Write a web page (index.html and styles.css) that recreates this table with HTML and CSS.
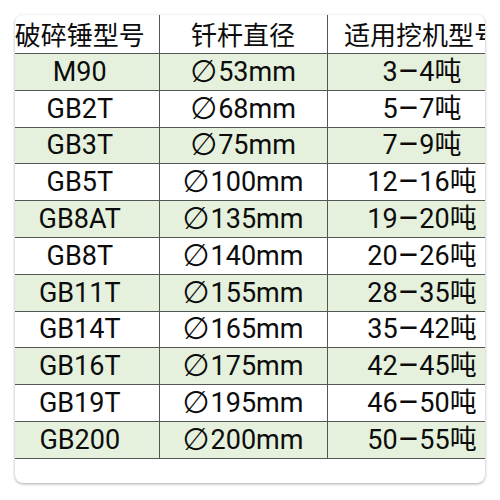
FILE: index.html
```html
<!DOCTYPE html>
<html>
<head>
<meta charset="utf-8">
<link rel="stylesheet" href="styles.css">
</head>
<body>
<div class="card">
<table class="spec">
<colgroup><col class="c1"><col class="c2"><col class="c3"></colgroup>
<thead>
<tr><th>破碎锤型号</th><th>钎杆直径</th><th>适用挖机型号</th></tr>
</thead>
<tbody>
<tr class="g"><td>M90</td><td><span class="d">∅</span>53mm</td><td>3<span class="m">–</span>4吨</td></tr>
<tr><td>GB2T</td><td><span class="d">∅</span>68mm</td><td>5<span class="m">–</span>7吨</td></tr>
<tr class="g"><td>GB3T</td><td><span class="d">∅</span>75mm</td><td>7<span class="m">–</span>9吨</td></tr>
<tr><td>GB5T</td><td><span class="d">∅</span>100mm</td><td>12<span class="m">–</span>16吨</td></tr>
<tr class="g"><td>GB8AT</td><td><span class="d">∅</span>135mm</td><td>19<span class="m">–</span>20吨</td></tr>
<tr><td>GB8T</td><td><span class="d">∅</span>140mm</td><td>20<span class="m">–</span>26吨</td></tr>
<tr class="g"><td>GB11T</td><td><span class="d">∅</span>155mm</td><td>28<span class="m">–</span>35吨</td></tr>
<tr><td>GB14T</td><td><span class="d">∅</span>165mm</td><td>35<span class="m">–</span>42吨</td></tr>
<tr class="g"><td>GB16T</td><td><span class="d">∅</span>175mm</td><td>42<span class="m">–</span>45吨</td></tr>
<tr><td>GB19T</td><td><span class="d">∅</span>195mm</td><td>46<span class="m">–</span>50吨</td></tr>
<tr class="g"><td>GB200</td><td><span class="d">∅</span>200mm</td><td>50<span class="m">–</span>55吨</td></tr>
</tbody>
</table>
</div>
</body>
</html>
```
FILE: styles.css
```css
html, body {
  margin: 0;
  padding: 0;
  background: #ffffff;
}
body {
  padding: 15px;
  font-family: Roboto, "Noto Sans CJK SC", sans-serif;
  color: #0c0c0c;
}
.card {
  width: 470px;
  height: 468px;
  border-radius: 8px;
  overflow: hidden;
  background: #fff;
  box-shadow: 0 1px 3px rgba(0,0,0,0.35);
}
.spec {
  margin-left: -14px;
  border-collapse: collapse;
  table-layout: fixed;
  width: 516px;
}
.c1 { width: 158px; }
.c2 { width: 168px; }
.c3 { width: 190px; }
.spec th {
  height: 38px;
  padding: 0;
  font-weight: 400;
  font-size: 26px;
  font-family: "Noto Sans CJK SC", sans-serif;
  white-space: nowrap;
  border-right: 1px solid #555;
  border-bottom: 1px solid #555;
  line-height: 36px;
}
.spec td {
  height: 35.8px;
  padding: 0;
  text-align: center;
  font-size: 27px;
  line-height: 34px;
  white-space: nowrap;
  border-right: 1px solid #555;
  border-bottom: 1px solid #555;
}
.spec tr.g td { background: #e5f1dc; }
.d {
  font-family: "DejaVu Sans", sans-serif;
  font-size: 31px;
  line-height: 0;
  margin-right: 1px;
  vertical-align: -1px;
}
.m {
  font-size: 33px;
  line-height: 0;
  vertical-align: -2px;
}
```
